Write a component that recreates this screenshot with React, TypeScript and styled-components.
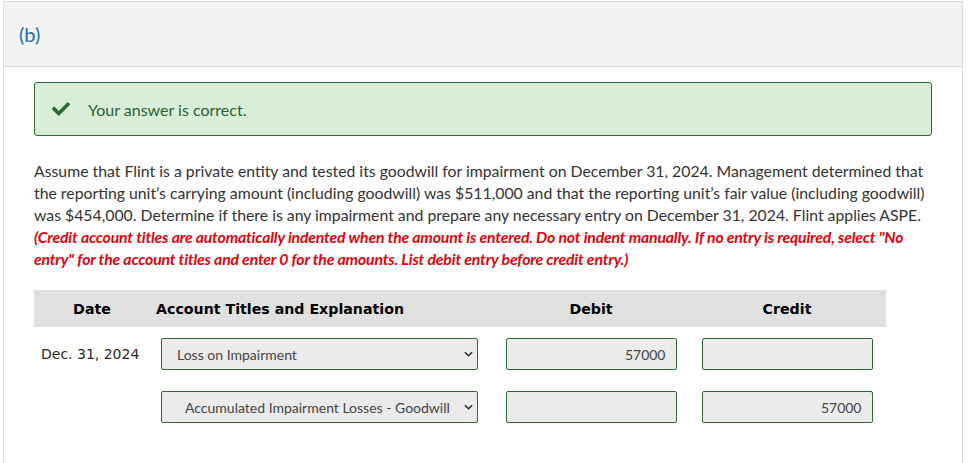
import styled, { createGlobalStyle } from 'styled-components';
import { FaCheck } from 'react-icons/fa';

const GlobalStyle = createGlobalStyle`
  html, body {
    margin: 0;
    padding: 0;
    background: #fff;
  }
  body {
    font-family: Lato, "Open Sans", sans-serif;
  }
`;

interface JournalLine {
  date: string;
  account: string;
  credit: boolean;
  debit: string;
  creditAmount: string;
}

const lines: JournalLine[] = [
  { date: 'Dec. 31, 2024', account: 'Loss on Impairment', credit: false, debit: '57000', creditAmount: '' },
  { date: '', account: 'Accumulated Impairment Losses - Goodwill', credit: true, debit: '', creditAmount: '57000' },
];

export default function App() {
  return (
    <>
      <GlobalStyle />
      <Panel>
        <PanelHeader>
          <PartLabel>(b)</PartLabel>
        </PanelHeader>
        <PanelBody>
          <Feedback>
            <FaCheck size={18} color="#2a6a33" />
            <span>Your answer is correct.</span>
          </Feedback>
          <Question>
            Assume that Flint is a private entity and tested its goodwill for impairment on December 31, 2024. Management
            determined that the reporting unit’s carrying amount (including goodwill) was $511,000 and that the reporting
            unit’s fair value (including goodwill) was $454,000. Determine if there is any impairment and prepare any
            necessary entry on December 31, 2024. Flint applies ASPE.
            <br />
            <Instructions>
              (Credit account titles are automatically indented when the amount is entered. Do not indent manually. If no
              entry is required, select "No entry" for the account titles and enter 0 for the amounts. List debit entry
              before credit entry.)
            </Instructions>
          </Question>
          <Journal>
            <HeaderCell $align="center">Date</HeaderCell>
            <HeaderCell $align="left">Account Titles and Explanation</HeaderCell>
            <HeaderCell $align="center">Debit</HeaderCell>
            <HeaderCell $align="center">Credit</HeaderCell>
            {lines.map((line, i) => (
              <Row key={i} $first={i === 0}>
                <DateCell>{line.date}</DateCell>
                <AccountCell>
                  <AccountSelect $indent={line.credit}>
                    <span>{line.account}</span>
                    <Chevron viewBox="0 0 10 6">
                      <path d="M1 1l4 4 4-4" fill="none" stroke="#222" strokeWidth="1.6" />
                    </Chevron>
                  </AccountSelect>
                </AccountCell>
                <AmountCell>
                  <AmountBox>{line.debit}</AmountBox>
                </AmountCell>
                <AmountCell>
                  <AmountBox>{line.creditAmount}</AmountBox>
                </AmountCell>
              </Row>
            ))}
          </Journal>
        </PanelBody>
      </Panel>
    </>
  );
}

const Panel = styled.div`
  margin: 1px 0 0 3px;
  width: 958px;
  border: 1px solid #dcdcdc;
  border-bottom: none;
  min-height: 470px;
`;

const PanelHeader = styled.div`
  height: 64px;
  background: #f2f2f2;
  border-bottom: 1px solid #d6d6d6;
  display: flex;
  align-items: center;
  padding-left: 15px;
`;

const PartLabel = styled.h3`
  margin: 0;
  font-size: 20px;
  font-weight: 400;
  color: #1f6fa8;
  font-family: Lato, sans-serif;
`;

const PanelBody = styled.div`
  padding: 15px 30px 0 30px;
`;

const Feedback = styled.div`
  height: 54px;
  box-sizing: border-box;
  border: 1px solid #2b6a37;
  border-radius: 3px;
  background: #d9eed8;
  display: flex;
  align-items: center;
  gap: 18px;
  padding-left: 17px;
  color: #2d5e33;
  font-size: 16px;
`;

const Question = styled.p`
  margin: 24px 0 0 0;
  width: 900px;
  font-size: 15.8px;
  line-height: 22px;
  color: #333;
`;

const Instructions = styled.em`
  color: #e8000b;
  font-weight: 700;
  font-style: italic;
  letter-spacing: -0.18px;
`;

const Journal = styled.div`
  margin-top: 20px;
  width: 852px;
  display: grid;
  grid-template-columns: 116px 344px 194px 198px;
  font-family: "DejaVu Sans", Verdana, sans-serif;
  font-size: 14px;
  color: #222;
`;

const HeaderCell = styled.div<{ $align: 'left' | 'center' }>`
  background: #e0e0e0;
  height: 37px;
  display: flex;
  align-items: center;
  justify-content: ${(p) => (p.$align === 'center' ? 'center' : 'flex-start')};
  padding-left: ${(p) => (p.$align === 'center' ? '0' : '6px')};
  font-size: 14.2px;
  font-weight: 700;
  color: #000;
`;

const Row = styled.div<{ $first: boolean }>`
  display: contents;
  & > div {
    margin-top: ${(p) => (p.$first ? '11px' : '21px')};
  }
`;

const DateCell = styled.div`
  height: 32px;
  display: flex;
  align-items: center;
  padding-left: 7px;
  color: #2a2a2a;
`;

const AccountCell = styled.div`
  padding-left: 11px;
`;

const AccountSelect = styled.div<{ $indent: boolean }>`
  width: 317px;
  height: 32px;
  box-sizing: border-box;
  border: 1px solid #2b6a37;
  border-radius: 2px;
  background: #ebebeb;
  display: flex;
  align-items: center;
  justify-content: space-between;
  padding: 0 4px 0 ${(p) => (p.$indent ? '23px' : '15px')};
  font-family: Lato, sans-serif;
  font-size: 14px;
  color: #444;
`;

const Chevron = styled.svg`
  width: 9px;
  height: 6px;
`;

const AmountCell = styled.div`
  display: flex;
  justify-content: center;
`;

const AmountBox = styled.div`
  width: 171px;
  height: 32px;
  box-sizing: border-box;
  border: 1px solid #2b6a37;
  border-radius: 2px;
  background: #ebebeb;
  display: flex;
  align-items: center;
  justify-content: flex-end;
  padding-right: 10px;
  font-family: Lato, sans-serif;
  font-size: 14px;
  color: #444;
`;
